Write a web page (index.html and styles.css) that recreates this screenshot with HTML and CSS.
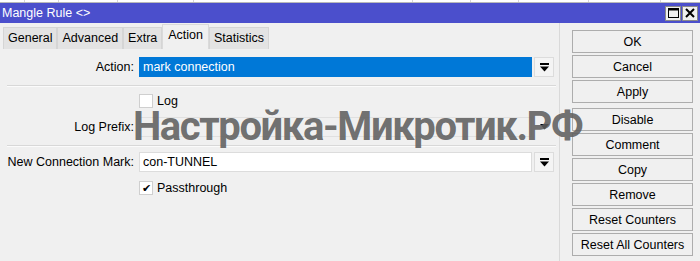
FILE: index.html
```html
<!DOCTYPE html>
<html lang="ru">
<head>
    <meta charset="UTF-8">
    <title>Mangle Rule</title>
    <link rel="stylesheet" href="styles.css">
</head>
<body>
    <div class="strip">
        <span style="width:24px"></span>
        <span style="width:33px"></span>
        <span style="width:58px"></span>
        <span style="width:75px"></span>
        <span style="width:218px"></span>
        <span style="width:57px"></span>
        <span style="width:47px"></span>
        <span style="width:69px"></span>
        <span style="width:71px"></span>
    </div>

    <div class="window">
        <div class="titlebar">
            <span class="title">Mangle Rule &lt;&gt;</span>
            <div class="title-btns">
                <span class="tbtn">
                    <svg width="11" height="10" viewBox="0 0 11 10"><rect x="0.5" y="0.5" width="10" height="9" fill="none" stroke="#000"/><line x1="0" y1="1.5" x2="11" y2="1.5" stroke="#000" stroke-width="2"/></svg>
                </span>
                <span class="tbtn">
                    <svg width="10" height="10" viewBox="0 0 10 10"><path d="M1 1 L9 9 M9 1 L1 9" stroke="#000" stroke-width="2"/></svg>
                </span>
            </div>
        </div>

        <div class="body">
            <div class="main">
                <div class="tabs">
                    <span class="tab">General</span>
                    <span class="tab">Advanced</span>
                    <span class="tab">Extra</span>
                    <span class="tab active">Action</span>
                    <span class="tab">Statistics</span>
                </div>

                <div class="form">
                    <div class="row">
                        <label class="label">Action:</label>
                        <div class="field selected">mark connection</div>
                        <span class="drop">
                            <svg width="9" height="9" viewBox="0 0 9 9"><rect x="0" y="0" width="9" height="2" fill="#000"/><path d="M0 3.5 H9 L4.5 8.5 Z" fill="#000"/></svg>
                        </span>
                    </div>

                    <div class="sep"></div>

                    <div class="check-row first">
                        <span class="box"></span>
                        <span>Log</span>
                    </div>

                    <div class="row prefix">
                        <label class="label">Log Prefix:</label>
                        <div class="field disabled"></div>
                        <span class="drop flat">
                            <svg width="9" height="6" viewBox="0 0 9 6"><path d="M0 0 H9 L4.5 5.5 Z" fill="#000"/></svg>
                        </span>
                    </div>

                    <div class="sep"></div>

                    <div class="row mark">
                        <label class="label">New Connection Mark:</label>
                        <div class="field">con-TUNNEL</div>
                        <span class="drop">
                            <svg width="9" height="9" viewBox="0 0 9 9"><rect x="0" y="0" width="9" height="2" fill="#000"/><path d="M0 3.5 H9 L4.5 8.5 Z" fill="#000"/></svg>
                        </span>
                    </div>

                    <div class="check-row second">
                        <span class="box">&#10004;</span>
                        <span>Passthrough</span>
                    </div>
                </div>
            </div>

            <div class="side">
                <button class="btn">OK</button>
                <button class="btn">Cancel</button>
                <button class="btn">Apply</button>
                <button class="btn group">Disable</button>
                <button class="btn">Comment</button>
                <button class="btn">Copy</button>
                <button class="btn">Remove</button>
                <button class="btn">Reset Counters</button>
                <button class="btn">Reset All Counters</button>
            </div>
        </div>

        <div class="watermark">Настройка-Микротик.РФ</div>
    </div>
</body>
</html>
```

FILE: styles.css
```css
body {
    margin: 0;
    width: 700px;
    height: 261px;
    overflow: hidden;
    background-color: #f0f0f0;
    font-family: 'Liberation Sans', Arial, sans-serif;
    font-size: 12.5px;
    color: #000;
}

.strip {
    display: flex;
    height: 2px;
    background-color: #fff;
    border-bottom: 1px solid #b9b9b9;
}

.strip span {
    border-right: 1px solid #d6d6d6;
}

.window {
    position: relative;
}

.titlebar {
    display: flex;
    align-items: center;
    justify-content: space-between;
    height: 20px;
    background-color: #4b4fcc;
    color: #fff;
    padding-left: 2px;
}

.title {
    font-size: 12.5px;
}

.title-btns {
    display: flex;
    gap: 1px;
    padding-right: 2px;
}

.tbtn {
    display: flex;
    align-items: center;
    justify-content: center;
    width: 16px;
    height: 15px;
    background-color: #f0f0f0;
    border: 1px solid #8a8a8a;
    box-sizing: border-box;
}

.body {
    display: flex;
}

.main {
    width: 559px;
    height: 238px;
    border-right: 1px solid #d9d9d9;
}

.tabs {
    display: flex;
    align-items: flex-end;
    height: 25px;
    margin-top: 1px;
    padding-left: 3px;
}

.tab {
    height: 22px;
    line-height: 21px;
    padding: 0 4px;
    background-color: #e3e3e3;
    border: 1px solid #d5d5d5;
    border-bottom: none;
    box-sizing: border-box;
}

.tab.active {
    height: 25px;
    line-height: 21px;
    background-color: #f0f0f0;
    border-color: #dadada;
    padding: 0 5px;
}

.form {
    padding-top: 8px;
}

.row {
    display: flex;
    align-items: center;
    height: 20px;
}

.label {
    width: 134px;
    text-align: right;
    margin-right: 5px;
}

.field {
    width: 393px;
    height: 20px;
    line-height: 19px;
    padding-left: 3px;
    box-sizing: border-box;
    background-color: #fff;
    border: 1px solid #dcdcdc;
}

.field.selected {
    background-color: #0078d7;
    border-color: #0078d7;
    color: #fff;
}

.field.disabled {
    background-color: #f0f0f0;
    border-color: #e0e0e0;
}

.drop {
    display: flex;
    align-items: center;
    justify-content: center;
    width: 20px;
    height: 20px;
    margin-left: 2px;
    box-sizing: border-box;
    background-color: #f4f4f4;
    border: 1px solid #dcdcdc;
}

.drop.flat {
    background-color: transparent;
    border-color: transparent;
}

.sep {
    height: 0;
    margin: 8px 3px 0 7px;
    border-top: 1px solid #d8d8d8;
    border-bottom: 1px solid #fbfbfb;
}

.check-row {
    display: flex;
    align-items: center;
    gap: 4px;
    height: 14px;
    padding-left: 139px;
}

.check-row.first {
    margin-top: 7px;
}

.check-row.second {
    margin-top: 9px;
}

.box {
    width: 14px;
    height: 14px;
    box-sizing: border-box;
    background-color: #fff;
    border: 1px solid #cfcfcf;
    font-size: 11px;
    line-height: 12px;
    text-align: center;
}

.row.prefix {
    margin-top: 9px;
}

.row.mark {
    margin-top: 5px;
}

.side {
    display: flex;
    flex-direction: column;
    gap: 2px;
    padding-top: 7px;
    padding-left: 12px;
}

.btn {
    width: 121px;
    height: 23px;
    padding: 0;
    font-family: inherit;
    font-size: 12.5px;
    color: #000;
    background-color: #f0f0f0;
    border: 1px solid #adadad;
}

.btn.group {
    margin-top: 3px;
}

.watermark {
    position: absolute;
    left: 133px;
    top: 107px;
    font-family: Roboto, 'Open Sans', sans-serif;
    font-weight: 700;
    font-size: 40px;
    line-height: 34px;
    letter-spacing: -1.4px;
    color: rgba(95, 95, 95, 0.9);
    white-space: nowrap;
}
```
